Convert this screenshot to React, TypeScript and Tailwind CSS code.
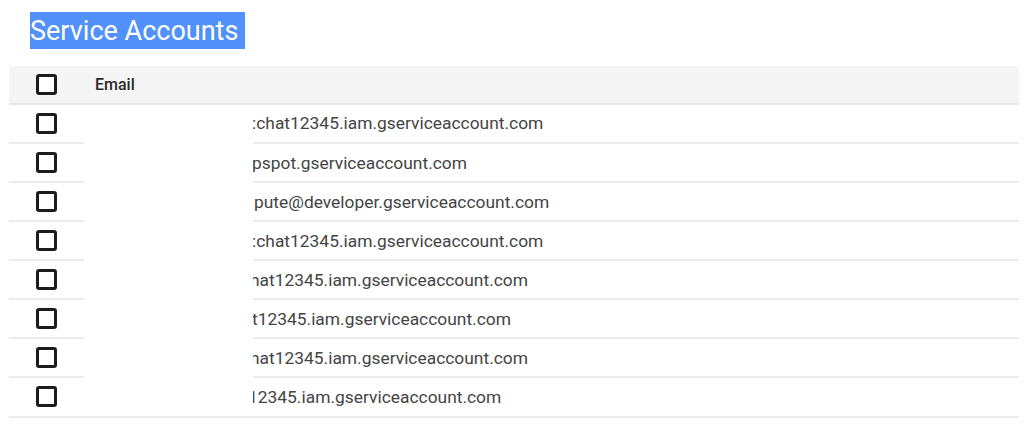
const rows = [
  { text: ":chat12345.iam.gserviceaccount.com", clip: "-ml-[1px]" },
  { text: "pspot.gserviceaccount.com", clip: "-ml-[1px]" },
  { text: "pute@developer.gserviceaccount.com", clip: "ml-[1px]" },
  { text: ":chat12345.iam.gserviceaccount.com", clip: "-ml-[1px]" },
  { text: "hat12345.iam.gserviceaccount.com", clip: "-ml-[3px]" },
  { text: "t12345.iam.gserviceaccount.com", clip: "-ml-[1px]" },
  { text: "hat12345.iam.gserviceaccount.com", clip: "-ml-[3px]" },
  { text: "12345.iam.gserviceaccount.com", clip: "-ml-[5px]" },
];

function Check() {
  return (
    <div className="w-[21px] h-[21px] rounded-[3px] border-[3px] border-[#1c1c1c] bg-white" />
  );
}

export default function App() {
  return (
    <div className="w-[1024px] h-[442px] bg-white overflow-hidden font-['Roboto',sans-serif]">
      <div className="pl-[30px] pt-[12px] h-[66px]">
        <span className="inline-flex items-center h-[37px] pt-[2px] w-[215px] bg-[#5291fb] text-white text-[27px] leading-none">
          Service Accounts
        </span>
      </div>
      <div className="ml-[9px] w-[1010px]">
        <div className="flex items-center h-[39px] bg-[#f5f5f5] border-b-2 border-[#e8e8e8]">
          <div className="w-[75px] pl-[27px]">
            <Check />
          </div>
          <span className="pl-[11px] text-[16px] font-medium text-[#2b2b2b]">Email</span>
        </div>
        {rows.map((r, i) => (
          <div key={i} className="flex h-[39.07px]">
            <div className="w-[75px] pl-[27px] flex items-center border-b-2 border-[#ececec]">
              <Check />
            </div>
            <div className={`w-[169px] border-b-2 ${i === rows.length - 1 ? "border-[#ececec]" : "border-white"}`} />
            <div className="flex-1 min-w-0 flex items-center overflow-hidden border-b-2 border-[#ececec]">
              <span className={`whitespace-nowrap text-[17.4px] text-[#444444] ${r.clip}`}>{r.text}</span>
            </div>
          </div>
        ))}
      </div>
    </div>
  );
}
